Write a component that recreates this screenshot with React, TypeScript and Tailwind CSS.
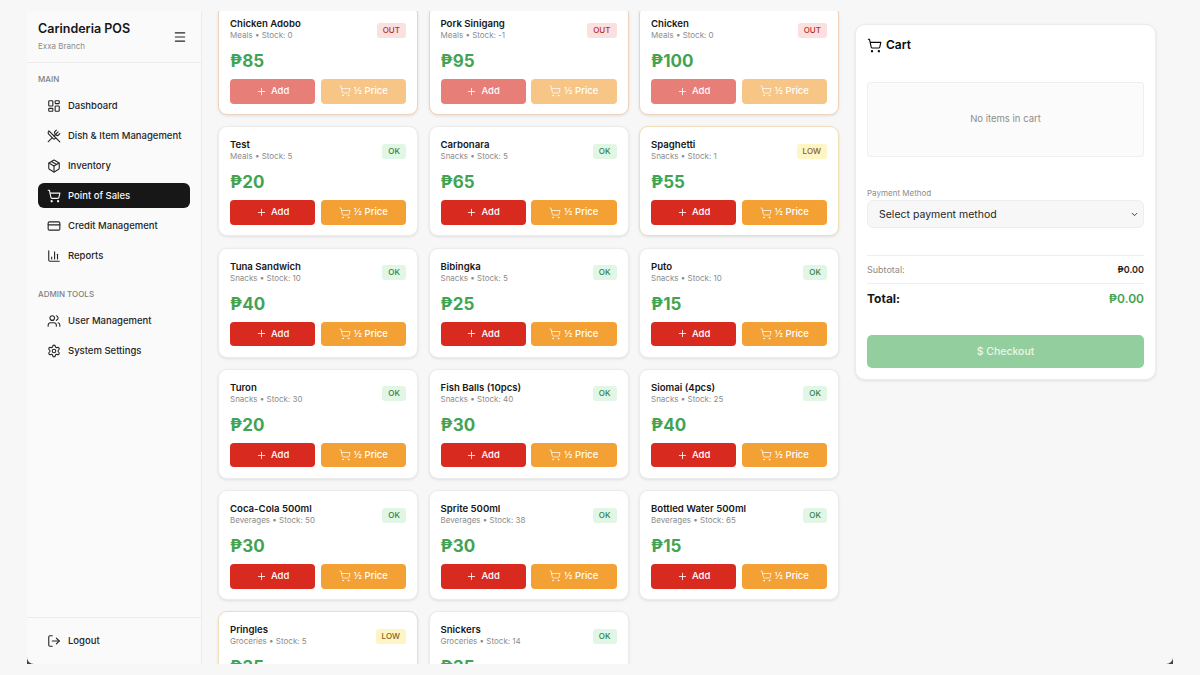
import {
  ChartColumn,
  ChevronDown,
  CreditCard,
  LayoutDashboard,
  LogOut,
  Menu,
  Package,
  Plus,
  Settings,
  ShoppingCart,
  Users,
  UtensilsCrossed,
} from 'lucide-react';

type Status = 'OUT' | 'LOW' | 'OK';

interface Item {
  name: string;
  category: string;
  stock: number;
  price: number;
  status: Status;
}

const items: Item[] = [
  { name: 'Chicken Adobo', category: 'Meals', stock: 0, price: 85, status: 'OUT' },
  { name: 'Pork Sinigang', category: 'Meals', stock: -1, price: 95, status: 'OUT' },
  { name: 'Chicken', category: 'Meals', stock: 0, price: 100, status: 'OUT' },
  { name: 'Test', category: 'Meals', stock: 5, price: 20, status: 'OK' },
  { name: 'Carbonara', category: 'Snacks', stock: 5, price: 65, status: 'OK' },
  { name: 'Spaghetti', category: 'Snacks', stock: 1, price: 55, status: 'LOW' },
  { name: 'Tuna Sandwich', category: 'Snacks', stock: 10, price: 40, status: 'OK' },
  { name: 'Bibingka', category: 'Snacks', stock: 5, price: 25, status: 'OK' },
  { name: 'Puto', category: 'Snacks', stock: 10, price: 15, status: 'OK' },
  { name: 'Turon', category: 'Snacks', stock: 30, price: 20, status: 'OK' },
  { name: 'Fish Balls (10pcs)', category: 'Snacks', stock: 40, price: 30, status: 'OK' },
  { name: 'Siomai (4pcs)', category: 'Snacks', stock: 25, price: 40, status: 'OK' },
  { name: 'Coca-Cola 500ml', category: 'Beverages', stock: 50, price: 30, status: 'OK' },
  { name: 'Sprite 500ml', category: 'Beverages', stock: 38, price: 30, status: 'OK' },
  { name: 'Bottled Water 500ml', category: 'Beverages', stock: 65, price: 15, status: 'OK' },
  { name: 'Pringles', category: 'Groceries', stock: 5, price: 35, status: 'LOW' },
  { name: 'Snickers', category: 'Groceries', stock: 14, price: 35, status: 'OK' },
];

const mainNav = [
  { label: 'Dashboard', icon: LayoutDashboard },
  { label: 'Dish & Item Management', icon: UtensilsCrossed },
  { label: 'Inventory', icon: Package },
  { label: 'Point of Sales', icon: ShoppingCart, active: true },
  { label: 'Credit Management', icon: CreditCard },
  { label: 'Reports', icon: ChartColumn },
];

const adminNav = [
  { label: 'User Management', icon: Users },
  { label: 'System Settings', icon: Settings },
];

const badgeStyles: Record<Status, string> = {
  OUT: 'bg-[#fbe0e0] text-[#b3302c]',
  LOW: 'bg-[#fdf5c4] text-[#8a5a1c]',
  OK: 'bg-[#e2f6e6] text-[#2f7d46]',
};

const cardBorders: Record<Status, string> = {
  OUT: 'border-[#efd3bd]',
  LOW: 'border-[#efdfb8]',
  OK: 'border-[#ececec]',
};

function NavItem({ label, icon: Icon, active }: { label: string; icon: typeof Menu; active?: boolean }) {
  return (
    <div
      className={`flex h-[25px] items-center gap-[7px] rounded-[6px] pl-[9px] text-[9.5px] font-medium ${
        active ? 'bg-[#171717] text-[#f5f5f5]' : 'text-[#262626]'
      }`}
    >
      <Icon size={14} strokeWidth={1.9} />
      <span className="pt-[1px]">{label}</span>
    </div>
  );
}

function ProductCard({ item }: { item: Item }) {
  const disabled = item.status === 'OUT';
  return (
    <div
      className={`h-[110px] rounded-[9px] border bg-white px-[11px] pt-[10px] shadow-[0_1px_3px_rgba(0,0,0,0.1)] ${cardBorders[item.status]}`}
    >
      <div className="flex h-[28px] items-center justify-between">
        <div className="pb-[2px]">
          <div className="text-[9.6px] leading-[13px] font-semibold text-[#171717]">{item.name}</div>
          <div className="text-[8px] leading-[11px] text-[#8c8c8c]">
            {item.category} • Stock: {item.stock}
          </div>
        </div>
        <span className={`rounded-[3px] px-[6px] py-[2px] text-[8px] leading-[11px] font-medium ${badgeStyles[item.status]}`}>
          {item.status}
        </span>
      </div>
      <div className="mt-[4px] h-[26px] text-[17px] leading-[26px] font-bold text-[#43a353]">₱{item.price}</div>
      <div className={`mt-[5px] grid grid-cols-2 gap-[5.5px] ${disabled ? 'opacity-60' : ''}`}>
        <button className="flex h-[24.5px] items-center justify-center gap-[4px] rounded-[4px] bg-[#d92a20] text-[9.5px] font-medium text-white">
          <Plus size={11} strokeWidth={1.8} />
          Add
        </button>
        <button className="flex h-[24.5px] items-center justify-center gap-[3px] rounded-[4px] bg-[#f3a035] text-[9.5px] font-medium text-white">
          <ShoppingCart size={12} strokeWidth={1.5} />
          ½ Price
        </button>
      </div>
    </div>
  );
}

function Corner({ side }: { side: 'left' | 'right' }) {
  return (
    <svg
      viewBox="0 0 7 7"
      className={`absolute bottom-0 h-[7px] w-[7px] ${side === 'left' ? 'left-0' : 'right-0'}`}
    >
      <path d={side === 'left' ? 'M0 0V7H7C3 7 0 4 0 0Z' : 'M7 0V7H0C4 7 7 4 7 0Z'} fill="#3f4347" />
    </svg>
  );
}

export default function App() {
  return (
    <div
      className="h-[675px] w-[1200px] overflow-hidden bg-[#f7f7f7] px-[27px] py-[11px]"
      style={{ fontFamily: 'Inter, "Noto Sans", sans-serif' }}
    >
      <div className="relative flex h-[653px] overflow-hidden">
        {/* Sidebar */}
        <aside className="flex w-[175px] shrink-0 flex-col border-r border-[#ececec] bg-[#fafafa]">
          <div className="flex h-[52px] items-center justify-between border-b border-[#ececec] pr-[14px] pl-[11px]">
            <div>
              <div className="text-[12.5px] leading-[16px] font-semibold text-[#171717]">Carinderia POS</div>
              <div className="mt-[4px] text-[8px] leading-[11px] text-[#8c8c8c]">Exxa Branch</div>
            </div>
            <Menu size={14} strokeWidth={2} className="text-[#262626]" />
          </div>
          <div className="flex-1 px-[11px] pt-[11px]">
            <div className="mb-[8px] text-[8px] leading-[11px] font-medium text-[#808080]">MAIN</div>
            <div className="flex flex-col gap-[5px]">
              {mainNav.map((n) => (
                <NavItem key={n.label} {...n} />
              ))}
            </div>
            <div className="mt-[21px] mb-[8px] text-[8px] leading-[11px] font-medium text-[#808080]">ADMIN TOOLS</div>
            <div className="flex flex-col gap-[5px]">
              {adminNav.map((n) => (
                <NavItem key={n.label} {...n} />
              ))}
            </div>
          </div>
          <div className="h-[47px] border-t border-[#ececec] px-[11px] pt-[10px]">
            <NavItem label="Logout" icon={LogOut} />
          </div>
        </aside>

        {/* Products */}
        <main className="h-full w-[653px] shrink-0 overflow-hidden pl-[16px]">
          <div className="mt-[-6px] grid w-[621px] grid-cols-3 gap-x-[10.5px] gap-y-[11.3px]">
            {items.map((item) => (
              <ProductCard key={item.name} item={item} />
            ))}
          </div>
        </main>

        {/* Cart */}
        <section className="mt-[13px] h-[356px] w-[301px] shrink-0 self-start rounded-[10px] border border-[#ececec] bg-white px-[11px] pt-[12px] shadow-[0_1px_3px_rgba(0,0,0,0.1)]">
          <div className="flex h-[16px] items-center gap-[4px] text-[12px] font-semibold text-[#0a0a0a]">
            <ShoppingCart size={15} strokeWidth={1.8} />
            Cart
          </div>
          <div className="mt-[29px] flex h-[75px] items-center justify-center rounded-[3px] border border-[#efefef] bg-[#fbfbfb] text-[9.5px] text-[#8c8c8c]">
            No items in cart
          </div>
          <div className="mt-[31px] text-[8px] leading-[11px] text-[#8c8c8c]">Payment Method</div>
          <div className="mt-[1px] flex h-[28px] items-center justify-between rounded-[6px] border border-[#eeeeee] bg-[#f7f7f7] pr-[4px] pl-[11px] text-[10.5px] text-[#262626]">
            <span className="pt-[1px]">Select payment method</span>
            <ChevronDown size={9} strokeWidth={2.4} />
          </div>
          <div className="mt-[27px] flex h-[28px] items-center justify-between border-t border-[#eeeeee] text-[9px]">
            <span className="text-[#8c8c8c]">Subtotal:</span>
            <span className="font-semibold text-[#262626]">₱0.00</span>
          </div>
          <div className="flex h-[30px] items-center justify-between border-t border-[#eeeeee]">
            <span className="text-[12px] font-bold text-[#171717]">Total:</span>
            <span className="text-[12px] font-semibold text-[#43a353]">₱0.00</span>
          </div>
          <button className="mt-[22px] flex h-[33px] w-full items-center justify-center rounded-[5px] bg-[#93cf9e] text-[10.5px] font-medium text-[#e9f6eb]">
            $ Checkout
          </button>
        </section>

        <Corner side="left" />
        <Corner side="right" />
      </div>
    </div>
  );
}
